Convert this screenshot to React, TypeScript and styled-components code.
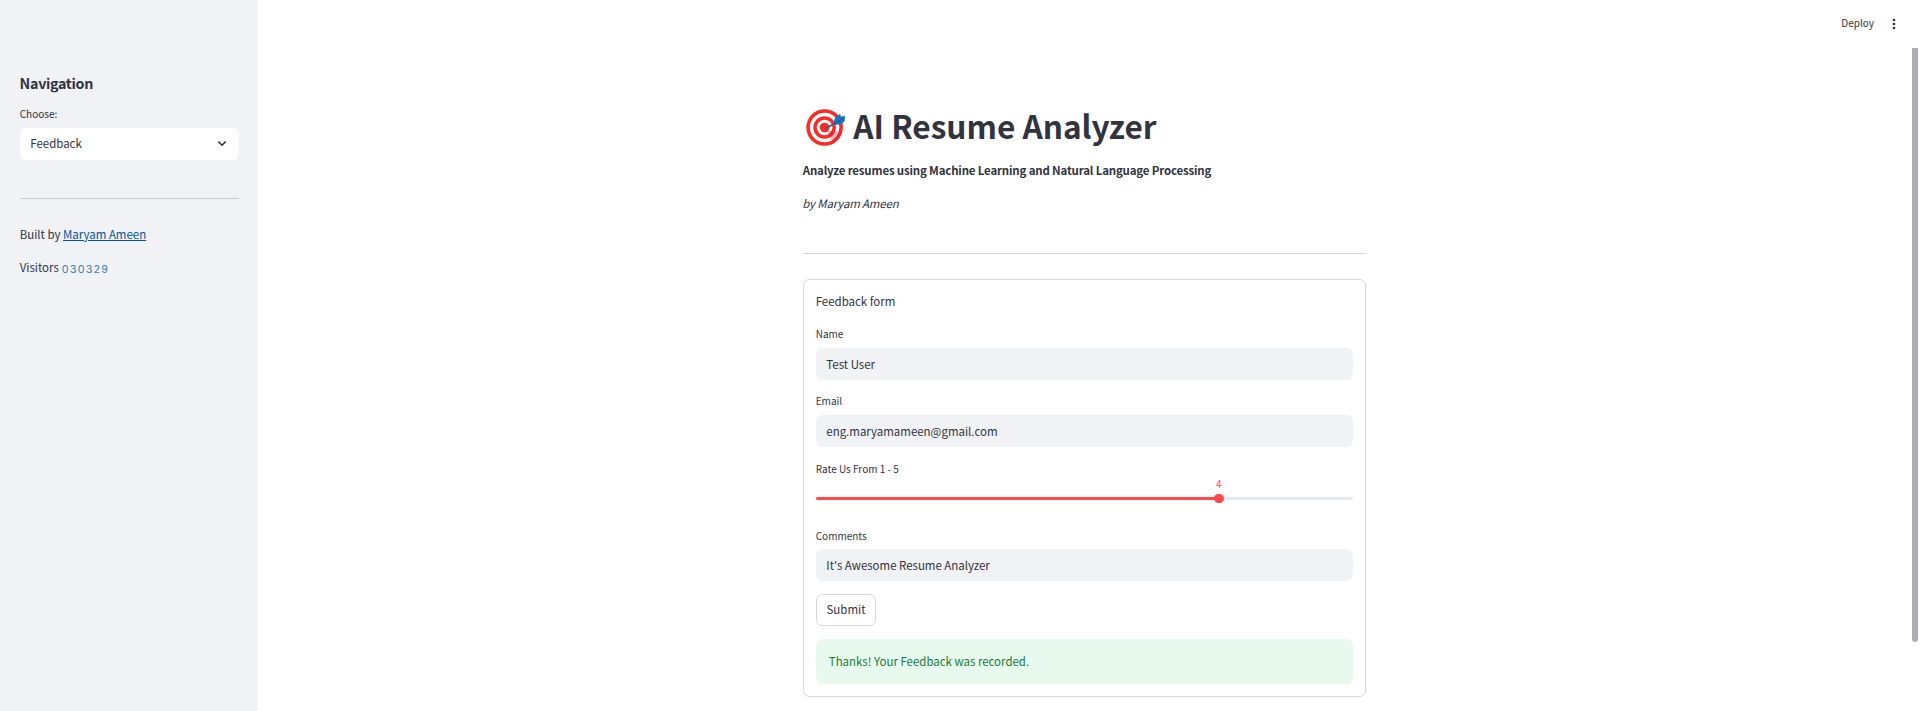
import React from "react";
import styled, { createGlobalStyle } from "styled-components";

const Global = createGlobalStyle`
  * { box-sizing: border-box; }
  html, body { margin: 0; height: 711px; overflow: hidden; }
  body {
    background: #fff;
    color: #31333f;
    font-family: "Noto Sans CJK SC", "Noto Sans", sans-serif;
    font-size: 11.46px;
  }
`;

const Page = styled.div`
  display: flex;
  width: 1920px;
  height: 711px;
`;

const Sidebar = styled.aside`
  width: 258px;
  flex: none;
  background: #f0f2f6;
  padding: 71px 19px 0 20px;
`;

const SideTitle = styled.h2`
  margin: 0 0 10px -0.4px;
  font-size: 14.3px;
  line-height: 24px;
  font-weight: 700;
  letter-spacing: -0.32px;
`;

const Label = styled.label<{ $top?: number; $gap?: number }>`
  display: block;
  margin: ${(p) => p.$top ?? 0}px 0 ${(p) => p.$gap ?? 5}px -0.3px;
  font-size: 10.03px;
  line-height: 18px;
`;

const Select = styled.div`
  display: flex;
  align-items: center;
  justify-content: space-between;
  height: 32px;
  padding: 0 12px 2px 10.3px;
  border-radius: 6.4px;
  background: #fff;
  line-height: 20px;
`;

const Rule = styled.hr<{ $top: number; $bottom: number }>`
  height: 1px;
  border: 0;
  margin: ${(p) => p.$top}px 0 ${(p) => p.$bottom}px;
  background: #d6d6d8;
`;

const SideRule = styled(Rule)`
  background: #cacbd1;
`;

const Paragraph = styled.p<{ $gap?: number }>`
  margin: 0 0 ${(p) => p.$gap ?? 13}px -0.3px;
  line-height: 20px;
  white-space: nowrap;
`;

const Tagline = styled.strong`
  font-weight: 700;
  letter-spacing: -0.16px;
`;

const Byline = styled.em`
  margin-left: -0.5px;
  letter-spacing: -0.16px;
`;

const Link = styled.a`
  color: #0054a3;
  text-decoration: underline;
  text-underline-offset: 1px;
`;

const Counter = styled.span`
  position: relative;
  top: 1px;
  margin-left: 3px;
  color: #3a86b0;
  font-family: Inter, sans-serif;
  font-size: 10.8px;
  letter-spacing: 1.2px;
`;

const Main = styled.main`
  flex: 1;
  display: flex;
  flex-direction: column;
  align-items: center;
  padding-right: 8px;
`;

const Toolbar = styled.header`
  align-self: stretch;
  display: flex;
  justify-content: flex-end;
  align-items: center;
  gap: 18px;
  height: 48px;
  padding-right: 16px;
  font-size: 10.03px;
`;

const Deploy = styled.span`
  padding-bottom: 4px;
`;

const Content = styled.div`
  width: 563px;
  margin-right: 1px;
  padding-top: 55px;
`;

const Title = styled.h1`
  display: flex;
  align-items: center;
  gap: 7.3px;
  height: 44px;
  margin: 0 0 13px;
  padding-left: 2px;
  font-size: 31.6px;
  line-height: 44px;
  font-weight: 700;
  white-space: nowrap;
`;

const Form = styled.form`
  height: 418px;
  padding: 11px 12px 0;
  border: 1px solid #d6d6d8;
  border-radius: 6.4px;
`;

const Field = styled.div`
  margin-bottom: 12px;
`;

const Input = styled.div`
  height: 32px;
  padding: 0 10.3px;
  border-radius: 6.4px;
  background: #f0f2f6;
  line-height: 32px;
`;

const SliderField = styled.div`
  height: 67px;
  padding-top: 1px;
`;

const SliderValue = styled.div`
  width: 150%;
  line-height: 14px;
  margin-top: -6px;
  text-align: center;
  color: #ff4b4b;
  font-size: 10.03px;
`;

const Track = styled.div`
  display: flex;
  align-items: center;
  height: 3px;
  margin-top: 6px;
  border-radius: 2px;
  background: linear-gradient(to right, #ff4b4b 75%, #e4e8f0 75%);
`;

const Thumb = styled.div`
  width: 9.6px;
  height: 9.6px;
  flex: none;
  margin-left: calc(75% - 4.8px);
  border-radius: 50%;
  background: #ff4b4b;
`;

const Submit = styled.button`
  display: block;
  width: 60px;
  height: 32px;
  margin: 13px 0;
  padding: 0 0 2px;
  border: 1px solid #d6d6d8;
  border-radius: 6.4px;
  background: #fff;
  color: inherit;
  font: inherit;
`;

const Alert = styled.div`
  height: 45px;
  padding: 0 12.8px;
  border-radius: 6.4px;
  background: #e8f9ee;
  color: #177d3a;
  line-height: 45px;
`;

const Scrollbar = styled.div`
  position: absolute;
  top: 48px;
  left: 1912px;
  width: 6px;
  height: 594px;
  border-radius: 0 0 3px 3px;
  background: #adadb2;
`;

const TargetIcon = styled.svg`
  flex: none;
  margin-top: 3.5px;
`;

const Target = () => (
  <TargetIcon width="41" height="40" viewBox="0 0 41 40">
    <circle cx="19.6" cy="20.5" r="18.3" fill="#ff2a23" />
    <circle cx="19.6" cy="20.5" r="14.7" fill="#fff" />
    <circle cx="19.6" cy="20.5" r="11.3" fill="#ff2a23" />
    <circle cx="19.6" cy="20.5" r="7.8" fill="#fff" />
    <circle cx="19.6" cy="20.5" r="4.8" fill="#ff2a23" />
    <path d="M21 23 L25 24 L36 25 Q34 31 28 35 L25 30Z" fill="#a52149" opacity=".35" />
    <path d="M20 22 L32 15" stroke="#29668d" strokeWidth="1.5" />
    <path d="M29 17.5 Q28 10 35 7 L36 9.5 L40 9 L39.7 14 Q36 19 29 17.5Z" fill="#1675bd" />
    <path d="M29 17 L39 11" stroke="#08559b" strokeWidth="1" />
  </TargetIcon>
);

const Chevron = () => (
  <svg width="10" height="8" viewBox="0 0 10 8" fill="none">
    <path d="M1.3 2.5 L5 6.2 L8.7 2.5" stroke="#31333f" strokeWidth="1.6" />
  </svg>
);

const Dots = () => (
  <svg width="4" height="12" viewBox="0 0 4 12" fill="#31333f">
    <circle cx="2" cy="2" r="1.3" />
    <circle cx="2" cy="6" r="1.3" />
    <circle cx="2" cy="10" r="1.3" />
  </svg>
);

export default function App() {
  return (
    <>
      <Global />
      <Page>
        <Sidebar>
          <SideTitle>Navigation</SideTitle>
          <Label>Choose:</Label>
          <Select>
            Feedback
            <Chevron />
          </Select>
          <SideRule $top={38} $bottom={25} />
          <Paragraph>
            Built by <Link>Maryam Ameen</Link>
          </Paragraph>
          <Paragraph>
            Visitors<Counter>030329</Counter>
          </Paragraph>
        </Sidebar>
        <Main>
          <Toolbar>
            <Deploy>Deploy</Deploy>
            <Dots />
          </Toolbar>
          <Content>
            <Title>
              <Target />
              <span>AI Resume Analyzer</span>
            </Title>
            <Paragraph>
              <Tagline>Analyze resumes using Machine Learning and Natural Language Processing</Tagline>
            </Paragraph>
            <Paragraph>
              <Byline>by Maryam Ameen</Byline>
            </Paragraph>
            <Rule $top={40} $bottom={25} />
            <Form>
              <Paragraph $gap={14}>Feedback form</Paragraph>
              <Field>
                <Label>Name</Label>
                <Input>Test User</Input>
              </Field>
              <Field>
                <Label>Email</Label>
                <Input>eng.maryamameen@gmail.com</Input>
              </Field>
              <SliderField>
                <Label>Rate Us From 1 - 5</Label>
                <SliderValue>4</SliderValue>
                <Track>
                  <Thumb />
                </Track>
              </SliderField>
              <Field>
                <Label $top={1} $gap={4}>Comments</Label>
                <Input>It's Awesome Resume Analyzer</Input>
              </Field>
              <Submit type="button">Submit</Submit>
              <Alert>Thanks! Your Feedback was recorded.</Alert>
            </Form>
          </Content>
        </Main>
      </Page>
      <Scrollbar />
    </>
  );
}
